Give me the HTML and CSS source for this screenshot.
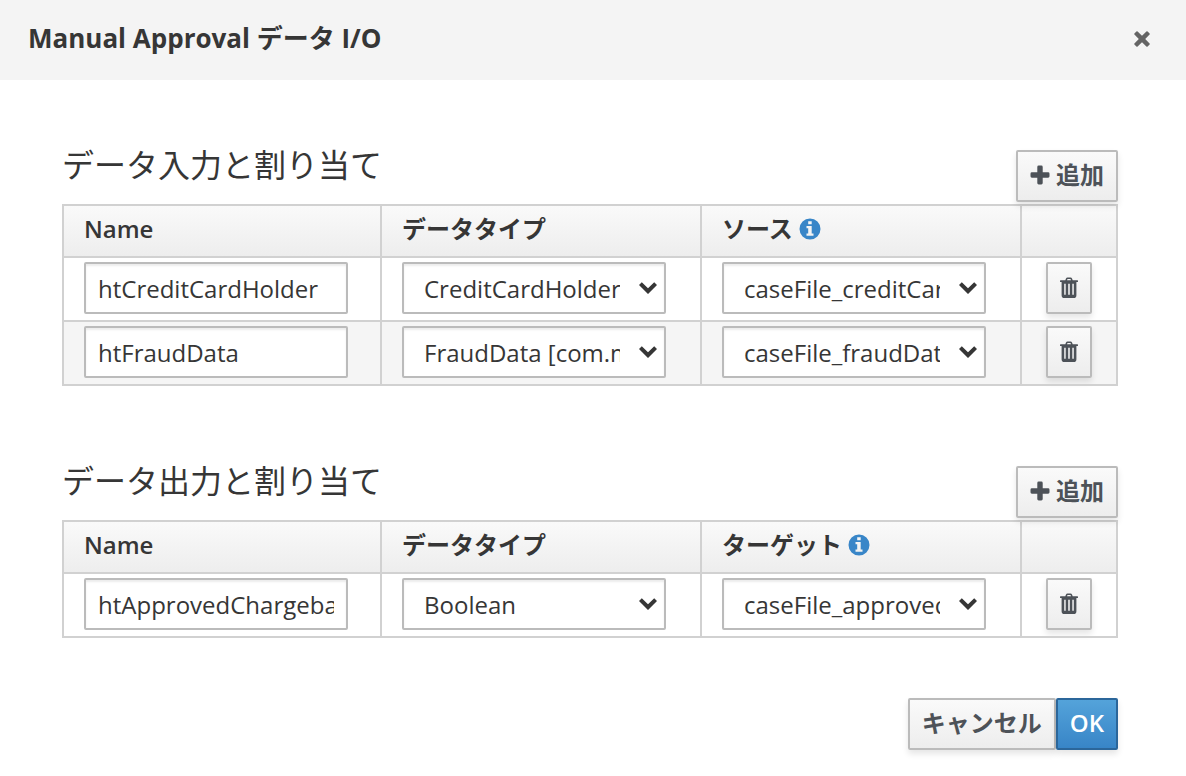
FILE: index.html
```html
<!DOCTYPE html>
<html lang="ja">
<head>
<meta charset="utf-8">
<meta name="viewport" content="width=device-width, initial-scale=1">
<title>Manual Approval データ I/O</title>
<link rel="stylesheet" href="styles.css">
</head>
<body>
<svg class="sprite" aria-hidden="true">
  <symbol id="plus" viewBox="0 0 20 20"><path d="M8.700 .5h2.600q1.400 0 1.400 1.400v5.400h5.400q1.400 0 1.400 1.400v2.600q0 1.400-1.400 1.400h-5.400v5.400q0 1.400-1.400 1.400H8.700q-1.400 0-1.400-1.400v-5.400H1.900Q.5 12.700.5 11.300V8.700q0-1.400 1.400-1.400h5.400V1.900Q7.300.5 8.700.5z"/></symbol>
  <symbol id="close" viewBox="0 0 18 18"><path d="M4.600 1.400 9 5.800l4.400-4.400q.6-.5 1.200 0l2 2q.5.600 0 1.200L12.200 9l4.400 4.400q.5.600 0 1.200l-2 2q-.6.500-1.200 0L9 12.200l-4.400 4.400q-.6.500-1.200 0l-2-2q-.5-.6 0-1.200L5.800 9 1.400 4.600q-.5-.6 0-1.200l2-2q.6-.5 1.200 0z"/></symbol>
  <symbol id="chevron" viewBox="0 0 20 14"><path d="M1 4 3.800 1.200 10 7.300l6.200-6.100L19 4l-9 9z"/></symbol>
  <symbol id="info" viewBox="0 0 22 22"><path fill-rule="evenodd" d="M11 .5a10.500 10.500 0 1 1 0 21 10.500 10.500 0 0 1 0-21zM9.200 3.200v3.100h3.500V3.200zM7.500 8.100v2.200h1.700v5.300H7.500v2.200h7v-2.200h-1.800V8.100z"/></symbol>
  <symbol id="trash" viewBox="0 0 20 22"><path fill-rule="evenodd" d="M6.300 3.200 7 1.600Q7.400.6 8.500.6h3q1.100 0 1.500 1l.7 1.600h4.700q.6 0 .6.600v.600q0 .6-.6.600h-1v13.200q0 2.800-2.500 2.800H5.100q-2.500 0-2.500-2.800V5h-1Q1 5 1 4.400v-.6q0-.6.600-.6zM8 3.200h4l-.5-1.100h-3zM5.200 6.800v11h1.500v-11zM9.200 6.800v11h1.600v-11zM13.300 6.800v11h1.500v-11z"/></symbol>
</svg>
<main class="dialog" role="dialog" aria-labelledby="dialog-title">
  <header class="dialog-header">
    <h1 class="dialog-title" id="dialog-title">Manual Approval データ I/O</h1>
    <button class="close" type="button" aria-label="閉じる"><svg class="close-icon"><use href="#close"/></svg></button>
  </header>
  <div class="dialog-body">
    <section class="assignments">
      <div class="section-head">
        <h2 class="section-title">データ入力と割り当て</h2>
        <button class="btn" type="button"><svg class="plus-icon"><use href="#plus"/></svg>追加</button>
      </div>
      <table class="grid">
        <colgroup><col class="name-col"><col><col><col class="action-col"></colgroup>
        <thead>
          <tr><th scope="col">Name</th><th scope="col">データタイプ</th><th scope="col"><span class="head-label">ソース<svg class="info-icon"><use href="#info"/></svg></span></th><td></td></tr>
        </thead>
        <tbody>
          <tr>
            <td><input class="field" type="text" aria-label="Name" value="htCreditCardHolder"></td>
            <td><span class="picker"><select class="field" aria-label="データタイプ"><option>CreditCardHolder [com.myspace]</option></select><svg class="chevron"><use href="#chevron"/></svg></span></td>
            <td><span class="picker"><select class="field" aria-label="ソース"><option>caseFile_creditCardHolder</option></select><svg class="chevron"><use href="#chevron"/></svg></span></td>
            <td class="action"><button class="btn btn-icon" type="button" aria-label="削除"><svg class="trash-icon"><use href="#trash"/></svg></button></td>
          </tr>
          <tr>
            <td><input class="field" type="text" aria-label="Name" value="htFraudData"></td>
            <td><span class="picker"><select class="field" aria-label="データタイプ"><option>FraudData [com.myspace]</option></select><svg class="chevron"><use href="#chevron"/></svg></span></td>
            <td><span class="picker"><select class="field" aria-label="ソース"><option>caseFile_fraudData</option></select><svg class="chevron"><use href="#chevron"/></svg></span></td>
            <td class="action"><button class="btn btn-icon" type="button" aria-label="削除"><svg class="trash-icon"><use href="#trash"/></svg></button></td>
          </tr>
        </tbody>
      </table>
    </section>
    <section class="assignments">
      <div class="section-head">
        <h2 class="section-title">データ出力と割り当て</h2>
        <button class="btn" type="button"><svg class="plus-icon"><use href="#plus"/></svg>追加</button>
      </div>
      <table class="grid">
        <colgroup><col class="name-col"><col><col><col class="action-col"></colgroup>
        <thead>
          <tr><th scope="col">Name</th><th scope="col">データタイプ</th><th scope="col"><span class="head-label">ターゲット<svg class="info-icon"><use href="#info"/></svg></span></th><td></td></tr>
        </thead>
        <tbody>
          <tr>
            <td><input class="field" type="text" aria-label="Name" value="htApprovedChargeback"></td>
            <td><span class="picker"><select class="field" aria-label="データタイプ"><option>Boolean</option></select><svg class="chevron"><use href="#chevron"/></svg></span></td>
            <td><span class="picker"><select class="field" aria-label="ターゲット"><option>caseFile_approvedChargeback</option></select><svg class="chevron"><use href="#chevron"/></svg></span></td>
            <td class="action"><button class="btn btn-icon" type="button" aria-label="削除"><svg class="trash-icon"><use href="#trash"/></svg></button></td>
          </tr>
        </tbody>
      </table>
    </section>
    <footer class="dialog-footer">
      <button class="btn" type="button">キャンセル</button>
      <button class="btn btn-primary" type="button">OK</button>
    </footer>
  </div>
</main>
</body>
</html>
```
FILE: styles.css
```css
* { box-sizing: border-box; }
body {
  margin: 0;
  background: #fff;
  color: #363636;
  font: 24px/40px "Open Sans", "Noto Sans CJK JP", sans-serif;
}
svg { display: block; fill: currentColor; flex: none; }
.sprite { display: none; }
.dialog-header {
  display: flex;
  align-items: center;
  justify-content: space-between;
  height: 80px;
  padding: 0 35px 4px 28px;
  background: #f4f4f4;
}
.dialog-title { margin: 0; font-size: 26px; font-weight: 700; }
.close { padding: 0; border: 0; background: none; color: #646464; cursor: pointer; }
.close-icon { width: 18px; height: 18px; margin-top: 2px; }
.dialog-body { padding: 70px 68px 26px 62px; }
.assignments { margin-bottom: 80px; }
.assignments:last-of-type { margin-bottom: 60px; }
.section-head {
  display: flex;
  align-items: flex-start;
  justify-content: space-between;
  height: 54px;
}
.section-title { margin: 0; font-size: 32px; line-height: 30px; font-weight: 400; }
.btn {
  display: inline-flex;
  align-items: center;
  justify-content: center;
  gap: 6px;
  height: 52px;
  padding: 0 12px 2px;
  border: 2px solid #bbb;
  border-radius: 2px;
  background: linear-gradient(#fafafa, #ededed);
  box-shadow: 0 4px 6px rgba(3, 3, 3, .1);
  color: #4d5258;
  font: inherit;
  font-weight: 600;
  line-height: 40px;
  white-space: nowrap;
  cursor: pointer;
}
.btn-primary {
  border-color: #2b669a;
  background: linear-gradient(#54a3da, #3885c7);
  color: #fff;
}
.btn-icon { display: flex; width: 46px; padding: 0; }
.plus-icon { width: 20px; height: 20px; }
.trash-icon { width: 20px; height: 22px; }
.grid { width: 100%; border-collapse: collapse; table-layout: fixed; }
.name-col { width: 318px; }
.action-col { width: 96px; }
.grid th, .grid td {
  padding: 4px 20px 6px;
  border: 2px solid #d1d1d1;
  text-align: left;
  vertical-align: top;
}
.grid thead { background: linear-gradient(#fafafa, #ededed); }
.grid th { padding: 3px 20px 7px; font-weight: 600; }
.grid tbody tr:nth-child(even) { background: #f5f5f5; }
.grid .action { padding-left: 24px; padding-right: 0; }
.head-label { display: flex; align-items: center; gap: 6px; }
.info-icon { width: 22px; height: 22px; color: #3986c8; }
.field {
  display: block;
  grid-area: 1 / 1;
  width: 100%;
  max-width: 264px;
  height: 52px;
  margin: 0;
  padding: 0 12px;
  border: 2px solid #bbb;
  border-radius: 2px;
  background: #fff;
  box-shadow: inset 0 2px 2px rgba(3, 3, 3, .08);
  color: #363636;
  font: inherit;
  appearance: none;
}
.picker { display: grid; max-width: 264px; }
.picker .field { padding: 2px 44px 0 20px; }
.chevron {
  grid-area: 1 / 1;
  place-self: center end;
  width: 20px;
  height: 14px;
  margin-right: 8px;
  pointer-events: none;
}
.dialog-footer { display: flex; justify-content: flex-end; }
```
